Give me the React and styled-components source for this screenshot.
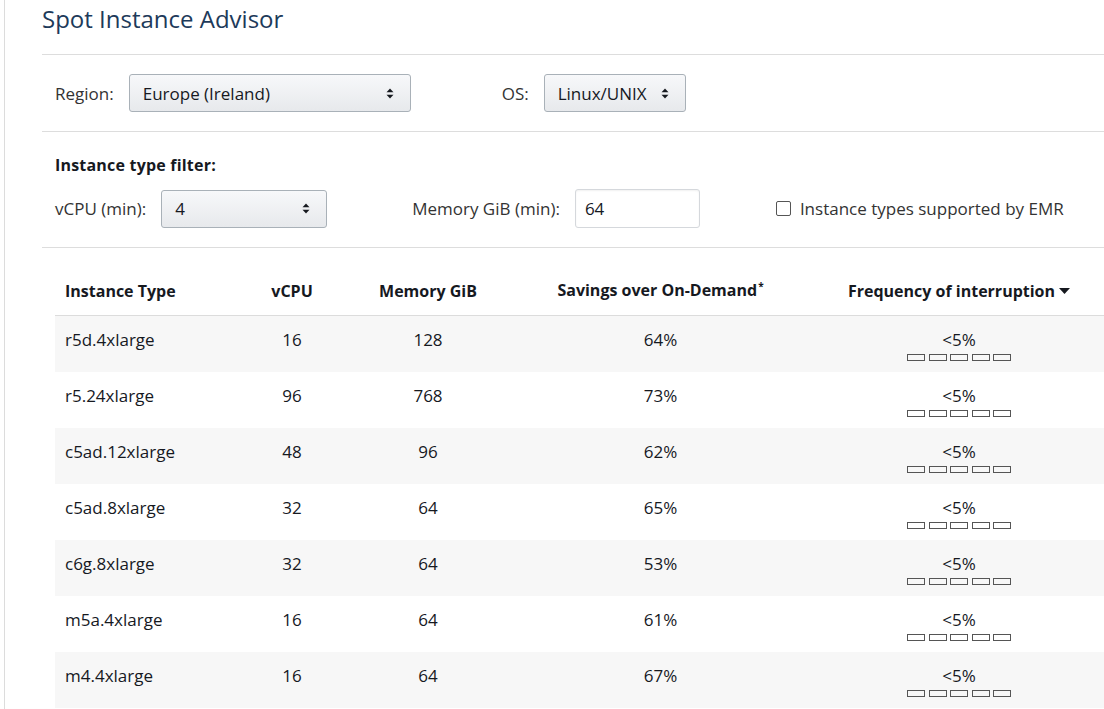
import React from "react";
import styled, { createGlobalStyle } from "styled-components";

const GlobalStyle = createGlobalStyle`
  html, body {
    margin: 0;
    padding: 0;
    background: #fff;
    overflow: hidden;
  }
  body {
    font-family: "Open Sans", "Noto Sans", "Liberation Sans", sans-serif;
    color: #16191f;
  }
`;

const rows = [
  { type: "r5d.4xlarge", vcpu: 16, mem: 128, savings: "64%", freq: "<5%" },
  { type: "r5.24xlarge", vcpu: 96, mem: 768, savings: "73%", freq: "<5%" },
  { type: "c5ad.12xlarge", vcpu: 48, mem: 96, savings: "62%", freq: "<5%" },
  { type: "c5ad.8xlarge", vcpu: 32, mem: 64, savings: "65%", freq: "<5%" },
  { type: "c6g.8xlarge", vcpu: 32, mem: 64, savings: "53%", freq: "<5%" },
  { type: "m5a.4xlarge", vcpu: 16, mem: 64, savings: "61%", freq: "<5%" },
  { type: "m4.4xlarge", vcpu: 16, mem: 64, savings: "67%", freq: "<5%" },
];

const Arrows = () => (
  <svg width="8" height="11" viewBox="0 0 8 11">
    <path d="M4 0.5 L7.5 4.2 L0.5 4.2 Z" fill="#16191f" />
    <path d="M4 10.5 L7.5 6.8 L0.5 6.8 Z" fill="#16191f" />
  </svg>
);

const Caret = () => (
  <svg width="11" height="6" viewBox="0 0 11 6">
    <path d="M0 0 L11 0 L5.5 6 Z" fill="#16191f" />
  </svg>
);

const App = () => {
  return (
    <>
      <GlobalStyle />
      <Page>
        <Title>Spot Instance Advisor</Title>
        <Section>
          <FieldRow $top={19} $bottom={19}>
            <Label>Region:</Label>
            <Select $width={282}>
              <span>Europe (Ireland)</span>
              <Arrows />
            </Select>
            <Label $offset={91}>OS:</Label>
            <Select $width={142}>
              <span>Linux/UNIX</span>
              <Arrows />
            </Select>
          </FieldRow>
        </Section>
        <Section>
          <FilterHeading>Instance type filter:</FilterHeading>
          <FieldRow $top={13} $bottom={19}>
            <Label>vCPU (min):</Label>
            <Select $width={166}>
              <span>4</span>
              <Arrows />
            </Select>
            <Label $offset={85}>Memory GiB (min):</Label>
            <Input>64</Input>
            <CheckLabel>
              <CheckBox />
              Instance types supported by EMR
            </CheckLabel>
          </FieldRow>
        </Section>
        <Table>
          <colgroup>
            <col style={{ width: 185 }} />
            <col style={{ width: 104 }} />
            <col style={{ width: 168 }} />
            <col style={{ width: 297 }} />
            <col style={{ width: 300 }} />
          </colgroup>
          <thead>
            <tr>
              <Th $align="left">Instance Type</Th>
              <Th>vCPU</Th>
              <Th>Memory GiB</Th>
              <Th>
                Savings over On-Demand<Sup>*</Sup>
              </Th>
              <Th>
                <SortLabel>
                  Frequency of interruption <Caret />
                </SortLabel>
              </Th>
            </tr>
          </thead>
          <tbody>
            {rows.map((r, i) => (
              <Tr key={r.type} $shaded={i % 2 === 0}>
                <Td $align="left">{r.type}</Td>
                <Td>{r.vcpu}</Td>
                <Td>{r.mem}</Td>
                <Td>{r.savings}</Td>
                <Td>
                  <Freq>
                    <span>{r.freq}</span>
                    <Meter>
                      {[0, 1, 2, 3, 4].map((k) => (
                        <MeterBox key={k} />
                      ))}
                    </Meter>
                  </Freq>
                </Td>
              </Tr>
            ))}
          </tbody>
        </Table>
      </Page>
    </>
  );
};

const Page = styled.div`
  margin-left: 4px;
  border-left: 1px solid #dcdcdc;
  padding-left: 37px;
  min-height: 709px;
  width: 1100px;
  box-sizing: border-box;
`;

const Title = styled.h1`
  margin: 0;
  height: 55px;
  box-sizing: border-box;
  padding-top: 4px;
  font-size: 24px;
  line-height: 30px;
  font-weight: 400;
  color: #1d3a5a;
  border-bottom: 1px solid #dddddd;
`;

const Section = styled.div`
  border-bottom: 1px solid #dddddd;
  padding-left: 13px;
`;

const FieldRow = styled.div`
  display: flex;
  align-items: center;
  padding-top: ${(p) => p.$top}px;
  padding-bottom: ${(p) => p.$bottom}px;
`;

const Label = styled.span`
  font-size: 17px;
  color: #333;
  margin-right: 15px;
  margin-left: ${(p) => p.$offset || 0}px;
  white-space: nowrap;
`;

const Select = styled.div`
  width: ${(p) => p.$width}px;
  height: 38px;
  flex-shrink: 0;
  box-sizing: border-box;
  display: flex;
  align-items: center;
  justify-content: space-between;
  padding: 0 16px 0 13px;
  border: 1px solid #a9b1b8;
  border-radius: 3px;
  background: linear-gradient(#f7f8fa, #e7e9ec);
  font-size: 17px;
  color: #16191f;
  span {
    white-space: nowrap;
  }
`;

const Input = styled.div`
  width: 125px;
  height: 39px;
  flex-shrink: 0;
  box-sizing: border-box;
  display: flex;
  align-items: center;
  padding-left: 9px;
  border: 1px solid #d5d8dc;
  border-radius: 3px;
  box-shadow: inset 0 1px 2px rgba(0, 0, 0, 0.06);
  font-size: 17px;
  color: #16191f;
`;

const CheckLabel = styled.label`
  display: flex;
  align-items: center;
  margin-left: 76px;
  font-size: 17px;
  color: #333;
  white-space: nowrap;
`;

const CheckBox = styled.span`
  width: 13px;
  height: 13px;
  border: 1px solid #555;
  border-radius: 2px;
  margin-right: 9px;
  background: #fff;
`;

const FilterHeading = styled.div`
  margin-top: 22px;
  font-size: 16px;
  line-height: 22px;
  font-weight: 700;
  color: #16191f;
  letter-spacing: 0.2px;
`;

const Table = styled.table`
  margin-top: 18px;
  margin-left: 13px;
  width: 1054px;
  table-layout: fixed;
  border-collapse: collapse;
  font-size: 17px;
`;

const Th = styled.th`
  height: 49px;
  padding: 0 10px;
  text-align: ${(p) => p.$align || "center"};
  font-size: 16px;
  font-weight: 700;
  color: #16191f;
  border-bottom: 1px solid #dcdcdc;
  white-space: nowrap;
  vertical-align: middle;
`;

const Sup = styled.sup`
  font-size: 10px;
  margin-left: 1px;
`;

const SortLabel = styled.span`
  display: inline-flex;
  align-items: center;
  gap: 4px;
`;

const Tr = styled.tr`
  background: ${(p) => (p.$shaded ? "#f7f7f7" : "#ffffff")};
`;

const Td = styled.td`
  height: 56px;
  box-sizing: border-box;
  padding: 12px 10px 0;
  text-align: ${(p) => p.$align || "center"};
  line-height: 24px;
  color: #16191f;
  vertical-align: top;
`;

const Freq = styled.div`
  display: flex;
  flex-direction: column;
  align-items: center;
  padding-top: 1px;
  span {
    line-height: 22px;
  }
`;

const Meter = styled.div`
  display: flex;
  gap: 3.5px;
  margin-top: 3px;
`;

const MeterBox = styled.div`
  width: 16px;
  height: 5px;
  border: 1px solid #555;
`;

export default App;
